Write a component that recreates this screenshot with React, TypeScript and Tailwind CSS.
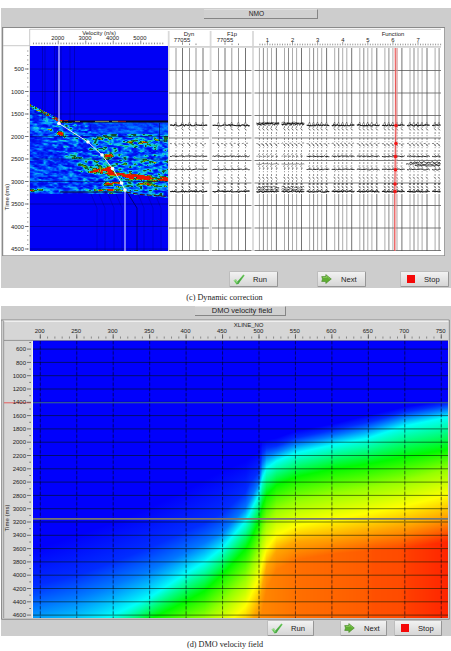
import type { ReactNode } from 'react'

type Point = [number, number]
type RGB = [number, number, number]

const range = (n: number) => Array.from({ length: n }, (_, i) => i)

function hash(x: number, y: number) {
  const s = Math.sin(x * 127.1 + y * 311.7) * 43758.5453
  return s - Math.floor(s)
}

// smooth value noise
function noise(x: number, y: number) {
  const xi = Math.floor(x)
  const yi = Math.floor(y)
  const u = (x - xi) * (x - xi) * (3 - 2 * (x - xi))
  const v = (y - yi) * (y - yi) * (3 - 2 * (y - yi))
  const top = hash(xi, yi) * (1 - u) + hash(xi + 1, yi) * u
  const bottom = hash(xi, yi + 1) * (1 - u) + hash(xi + 1, yi + 1) * u
  return top * (1 - v) + bottom * v
}

function ramp(stops: [number, RGB][], v: number): RGB {
  if (v <= stops[0][0]) return stops[0][1]
  for (let i = 1; i < stops.length; i++) {
    if (v <= stops[i][0]) {
      const [a, ca] = stops[i - 1]
      const [b, cb] = stops[i]
      const t = (v - a) / (b - a)
      return [0, 1, 2].map((k) => Math.round(ca[k] + (cb[k] - ca[k]) * t)) as RGB
    }
  }
  return stops[stops.length - 1][1]
}

const rgb = (c: RGB) => `rgb(${c[0]},${c[1]},${c[2]})`

/* ---------- NMO semblance ---------- */

const semblanceStops: [number, RGB][] = [
  [0, [0, 0, 230]],
  [0.18, [0, 40, 250]],
  [0.34, [0, 120, 255]],
  [0.47, [20, 200, 240]],
  [0.54, [20, 205, 150]],
  [0.6, [10, 60, 50]],
  [0.68, [50, 150, 20]],
  [0.76, [190, 180, 0]],
  [0.84, [150, 50, 0]],
  [0.94, [235, 20, 0]],
]

// centre x, centre y, half width, half height, slope, strength
const blobs = [
  [109, 155.2, 6, 2, 0, 0.8],
  [108.5, 167.5, 6, 2.8, -0.2, 0.8],
  [98, 172, 12, 1.6, 0.06, 0.5],
  [118, 173.5, 18, 2, 0.08, 0.65],
  [140, 177, 17, 2.4, 0.06, 0.75],
  [160, 178.3, 14, 2.1, 0.04, 0.75],
  [110, 183, 9, 1.6, 0, 0.55],
  [115, 189, 4, 3, -0.3, 0.55],
  [33, 190, 8, 1.8, 0, 0.75],
  [96, 189.5, 22, 1, 0, 0.4],
  [60, 133.5, 5, 2.3, 0.2, 0.55],
  [45, 128, 9, 1.6, 0.2, 0.3],
  [140, 140.5, 20, 2.3, 0, 0.34],
  [104, 138, 12, 2, 0.2, 0.22],
  [82, 158, 14, 2, 0.1, 0.25],
  [92, 168, 14, 3, 0.2, 0.2],
  [122, 152, 14, 2, 0, 0.22],
  [138, 162, 22, 2, 0, 0.2],
  [148, 184, 18, 1.8, 0.1, 0.25],
]

function semblance(x: number, y: number) {
  const roof = x < 66 ? 104 + (x - 30) * 0.49 : 121.5
  const floor = x < 124 ? 193 : 193 + (x - 124) * 0.11
  if (y < roof || y > floor) return -1
  const raw = noise(x / 5 + 7, y / 1.9 - x * 0.06) * 0.65 + noise(x / 2.2, y / 1.3 + 40) * 0.35
  const n = Math.max(0, Math.min(1, (raw - 0.5) * 1.7 + 0.5))
  // energy concentrates right of the diagonal trend
  const trend = Math.max(0, Math.min(1, (x - 30 - (y - 118) * 0.65) / 35))
  let v = 0.02 + n * (0.4 + 0.2 * trend)
  if (y < 134 && x > 90) v = 0.12 + n * 0.24
  for (const [cx, cy, w, h, slope, s] of blobs) {
    const dx = x - cx
    const dy = y - cy - slope * dx
    v += s * Math.exp(-((dx / w) ** 2) - (dy / h) ** 2) * (0.6 + n * 0.7)
  }
  if (x < 68 && y - roof < 3.5) v += (noise(x / 2, y * 1.2) - 0.1) * 0.65
  return Math.min(v, 1)
}

function buildSemblance() {
  const paths: Record<string, string> = {}
  for (let y = 103; y < 200; y++) {
    for (let x = 30; x < 168; x++) {
      const v = semblance(x, y)
      if (v < 0) continue
      const color = rgb(ramp(semblanceStops, Math.round(v * 36) / 36))
      paths[color] = (paths[color] ?? '') + `M${x} ${y}h1v1h-1z`
    }
  }
  return Object.entries(paths)
}

const semblancePaths = buildSemblance()

const picks: Point[] = [
  [59, 123.5],
  [88, 142],
  [102, 155],
  [112.5, 168.5],
  [121.5, 183],
  [125, 190],
]

function SemblancePlot() {
  return (
    <g>
      <rect x={30} y={46} width={138} height={205} fill="#0000f5" />
      <g shapeRendering="crispEdges">
        {semblancePaths.map(([color, d]) => (
          <path key={color} d={d} fill={color} />
        ))}
      </g>
      <path d="M62 121.5H168" stroke="#08081c" strokeWidth={1.9} />
      <path d="M75 121.4h5M95 121.4h14M112 121.4h6" stroke="#b5c35c" strokeWidth={0.7} />
      <path d="M118 121.4h8M64 120.5h4" stroke="#b02010" strokeWidth={0.8} />
      <path d="M60 192H122" stroke="#102018" strokeWidth={0.9} />
      <path d="M126 192L140 194.5L168 196.5" stroke="#401008" strokeDasharray="5 2" fill="none" />
      <path d="M159.5 123V141H168" stroke="#001070" strokeWidth={0.7} fill="none" />
      {[42.5, 45, 54.5, 57, 61, 70, 74.5].map((x) => (
        <path key={x} d={`M${x} 46V120`} stroke="#000078" strokeWidth={0.6} opacity={0.75} />
      ))}
      {[97, 105, 114, 122, 144, 153, 161].map((x) => (
        <path key={x} d={`M${x - 6} 194L${x} 208V251`} stroke="#000078" strokeWidth={0.5} fill="none" opacity={0.7} />
      ))}
      <path d="M127 192L137 208V251" stroke="#000050" strokeWidth={0.8} fill="none" />
      {range(9).map((i) => (
        <path key={i} d={`M30 ${69 + i * 22.5}H168`} stroke="#000060" strokeWidth={0.7} opacity={0.7} />
      ))}
      <path d="M59 46V123.5" stroke="#a9a9ff" strokeWidth={1.5} />
      <path d="M125 190V251" stroke="#c4c4ff" strokeWidth={1.2} />
      <path d={'M' + picks.map((p) => p.join(' ')).join('L')} stroke="#e8ecf4" strokeWidth={1} fill="none" />
      {picks.map(([x, y]) => (
        <circle key={y} cx={x} cy={y} r={1.8} fill="#fff" />
      ))}
    </g>
  )
}

/* ---------- NMO gathers ---------- */

const dynTraces = [176, 182.5, 189.5, 196, 203]
const f1pTraces = [218.5, 225, 231.8, 238.5, 245.5]
const functionGroups = range(8).map((g) =>
  [259.4, 263.4, 267.4, 271.5, 276.4].map((x) => x + g * 25.1).filter((x) => x < 441),
)

// horizontal reflection made of short wiggles
function wiggle(x0: number, x1: number, y: number, amp: number) {
  let d = `M${x0} ${y}`
  for (let x = x0 + 1.2; x < x1; x += 1.2) {
    d += `L${x.toFixed(1)} ${(y + (hash(x, y) - 0.5) * amp).toFixed(1)}`
  }
  return d
}

function Gather({ traces, group = -1 }: { traces: number[]; group?: number }) {
  const wide = group < 0
  const x0 = traces[0] - (wide ? 6 : 3)
  const x1 = Math.min(traces[traces.length - 1] + (wide ? 5 : 3), 441)
  const early = group === 0 || group === 1
  return (
    <g fill="none" stroke="#1c1c1c">
      {traces.map((x, i) => (
        <g key={x}>
          <path d={`M${x} 48V122M${x} 194V251`} stroke={i === 4 || wide ? '#444' : '#666'} strokeWidth={i === 4 || i === 1 ? 0.75 : 0.55} />
          <path d={`M${x} 126V193`} strokeWidth={0.65} strokeDasharray="2 1.2 1 1.8" strokeOpacity={0.75} />
          {[128, 144, 154, 166, 177, 186].map((y) => (
            <path key={y} d={`M${x - 1.4} ${y}l1.5 1.2l0.9 1.3`} strokeWidth={0.45} />
          ))}
          <path d={`M${x - 1} 184h2`} strokeWidth={1.1} />
          <path d={`M${x - 2} 126l2-4l1 4M${x - 2} 192l2-3l1 3`} strokeWidth={0.5} />
        </g>
      ))}
      <path d={wiggle(x0, x1, early ? 124 : 125.3, 1.4)} strokeWidth={1.1} />
      {early && <path d={wiggle(x0, x1, 122.8, 1.4)} strokeWidth={0.6} />}
      <path d={wiggle(x0, x1, 143.5, 1)} strokeWidth={0.55} strokeDasharray="2 2.4" />
      <path d={wiggle(x0, x1, 156.3, 1)} strokeWidth={early ? 0.5 : 0.9} strokeDasharray={early ? '2 2' : undefined} />
      <path d={wiggle(x0, x1, early ? 164 : 169.5, 1)} strokeWidth={early ? 0.5 : 0.9} />
      <path d={wiggle(x0, x1, 191.5, 1.3)} strokeWidth={1.1} />
      {early && <path d={wiggle(x0, x1, 187, 2.2) + wiggle(x0, x1, 189.4, 1.5)} strokeWidth={0.6} />}
    </g>
  )
}

function GatherPlots() {
  return (
    <g>
      {range(9).map((i) => (
        <path key={i} d={`M169 ${70.5 + i * 22.5}H209M212 ${70.5 + i * 22.5}H251.5M254.5 ${70.5 + i * 22.5}H441`} stroke="#444" strokeWidth={0.7} />
      ))}
      <Gather traces={dynTraces} />
      <Gather traces={f1pTraces} />
      {functionGroups.map((traces, g) => (
        <Gather key={g} traces={traces} group={g} />
      ))}
      <path d={wiggle(410, 441, 162.5, 1.6) + wiggle(406, 441, 164.2, 1.2) + wiggle(415, 441, 165.6, 0.8)} stroke="#111" strokeWidth={0.8} fill="none" />
      <path d="M394.8 48L398 48L397 190L396 251H394Z" fill="#f4a0a0" opacity={0.55} />
      <path d="M395.2 48L395.8 125L394.7 192V251" stroke="#e64646" strokeWidth={0.9} fill="none" />
      {[[396, 125.5], [396, 143.5], [395.5, 156.5], [395.5, 169.8], [395, 184], [395, 191.5]].map(([x, y]) => (
        <circle key={y} cx={x} cy={y} r={1.8} fill="#f01818" />
      ))}
    </g>
  )
}

function NmoChart() {
  return (
    <svg viewBox="2 27 443 229" className="block h-[229px] w-[443px] fill-[#222] text-[5.9px]">
      <rect x={2} y={27} width={443} height={229} fill="#8a8a8a" />
      <rect x={3.2} y={28} width={441} height={227.3} fill="#fff" />
      <path d="M3 45.7H30M29.7 29V251M30 29.3H441" stroke="#bdbdbd" strokeWidth={0.8} fill="none" />
      <path d="M168.7 31V251M210.6 31V251M253 31V251" stroke="#dadada" strokeWidth={1.8} />
      <path d="M169 46.8H441" stroke="#d2d2d2" strokeWidth={1.8} />

      <text x={99} y={34.6} textAnchor="middle">Velocity (n/s)</text>
      {[2000, 3000, 4000, 5000].map((v, i) => (
        <text key={v} x={57.7 + i * 27.4} y={40.4} textAnchor="middle">{v}</text>
      ))}
      {range(48).map((i) => (
        <path key={i} d={`M${33.5 + i * 2.75} ${(i + 1) % 10 === 0 ? 40.5 : 42.6}V44.3`} stroke="#444" strokeWidth={0.6} />
      ))}

      <text x={189} y={36.4} textAnchor="middle">Dyn</text>
      <text x={182} y={41.8} textAnchor="middle">77055</text>
      <text x={232} y={36.4} textAnchor="middle">F1p</text>
      <text x={225} y={41.8} textAnchor="middle">77055</text>
      <path d="M182.5 42.3v2.5M189.5 43.5v1.6M196 43.5v1.6M225 42.3v2.5M232 43.5v1.6M238.5 43.5v1.6" stroke="#444" strokeWidth={0.6} />

      <text x={393} y={36.4} textAnchor="middle">Function</text>
      {range(7).map((i) => (
        <text key={i} x={267.5 + i * 25.1} y={41.6} textAnchor="middle">{i + 1}</text>
      ))}
      {range(73).map((i) => (
        <path key={i} d={`M${259.9 + i * 2.51} ${i % 10 === 3 ? 42 : 43.7}V45.3`} stroke="#555" strokeWidth={0.6} />
      ))}

      {range(9).map((i) => (
        <g key={i}>
          <text x={24} y={71 + i * 22.5} textAnchor="end">{500 + i * 500}</text>
          <path d={`M25 ${69 + i * 22.5}H28.4`} stroke="#444" strokeWidth={0.7} />
        </g>
      ))}
      {range(45).map((i) => (
        <path key={i} d={`M27 ${51 + i * 4.5}H28.4`} stroke="#555" strokeWidth={0.6} />
      ))}
      <text transform="translate(9 197) rotate(-90)" textAnchor="middle">Time (ms)</text>

      <SemblancePlot />
      <GatherPlots />
    </svg>
  )
}

/* ---------- DMO velocity field ---------- */

// depth of each colour level at a given x
const contours: [number, number[]][] = [
  [33, [550, 586, 608, 645, 680, 710, 740, 770, 800]],
  [77, [535, 575, 597, 632, 665, 690, 720, 750, 780]],
  [113, [522, 562, 585, 615, 645, 670, 700, 730, 760]],
  [150, [507, 547, 570, 597, 619, 645, 670, 700, 730]],
  [186, [490, 531, 552, 573, 601, 626, 650, 680, 700]],
  [204, [480, 523, 543, 562, 591, 618, 640, 660, 680]],
  [223, [470, 512, 531, 547, 573, 602, 628, 645, 665]],
  [245, [461, 492, 508, 521, 549, 579, 606, 630, 650]],
  [249, [458, 483, 500, 514, 542, 571, 598, 625, 646]],
  [258, [452, 472, 484, 495, 522, 550, 579, 607, 632]],
  [262, [441, 453, 464, 478, 506, 534, 562, 585, 610]],
  [266, [440, 448, 456, 468, 495, 523, 549, 567, 590]],
  [276, [438, 446, 452, 461, 485, 510, 535, 551, 570]],
  [295, [431, 438, 444, 453, 477, 502, 526, 542, 560]],
  [332, [424, 430, 436, 445, 469, 494, 519, 538, 554]],
  [368, [415, 422, 428, 438, 464, 488, 513, 532, 551]],
  [404, [407, 412, 417, 426, 457, 481, 506, 526, 548]],
  [448, [400, 404, 409, 417, 449, 469, 495, 516, 542]],
]

const levelColors: RGB[] = [
  [0, 0, 252],
  [0, 45, 255],
  [0, 120, 255],
  [0, 255, 250],
  [0, 250, 0],
  [150, 255, 0],
  [255, 255, 0],
  [255, 165, 0],
]

const basementStops: [number, RGB][] = [
  [262, [255, 135, 0]],
  [300, [255, 110, 0]],
  [365, [255, 92, 0]],
  [372, [255, 80, 0]],
  [400, [255, 75, 0]],
  [408, [255, 62, 0]],
  [448, [255, 36, 0]],
]

function depthsAt(x: number) {
  const i = Math.max(1, contours.findIndex(([cx]) => x <= cx))
  const [x0, a] = contours[i - 1]
  const [x1, b] = contours[i]
  const t = (x - x0) / (x1 - x0)
  return a.map((y, k) => y + (b[k] - y) * t)
}

function VelocityField() {
  return (
    <g shapeRendering="crispEdges">
      {range(415).map((i) => {
        const x = 33 + i
        return (
          <g key={x}>
            <linearGradient id={`col${x}`} gradientUnits="userSpaceOnUse" x1={0} y1={341} x2={0} y2={841}>
              {depthsAt(x).map((y, k) => (
                <stop key={k} offset={(y - 341) / 500} stopColor={rgb(levelColors[k] ?? ramp(basementStops, x))} />
              ))}
            </linearGradient>
            <rect x={x} y={341} width={1} height={277} fill={`url(#col${x})`} />
          </g>
        )
      })}
    </g>
  )
}

function DmoChart() {
  const xs = range(12).map((i) => 40.3 + i * 36.45)
  const ys = range(21).map((i) => 349.1 + i * 13.3)
  return (
    <svg viewBox="1 319 450 301" className="block h-[301px] w-[450px] fill-[#222] text-[6px]">
      <rect x={1} y={319} width={450} height={301} fill="#cdcdcd" />
      <path d="M1 320H449.3V619.3H1.5Z" stroke="#858585" strokeWidth={0.9} fill="none" />
      <path d="M3.7 321.2H448.5" stroke="#fafafa" strokeWidth={1.2} />
      <rect x={4} y={322} width={444.5} height={296} fill="#d6d6d6" />
      <path d="M3.7 321V618" stroke="#8d8d8d" strokeWidth={0.8} />
      <path d="M4 340.4H33" stroke="#777" strokeWidth={0.7} />
      <path d="M32.4 341V618" stroke="#f0f0f0" />

      <VelocityField />
      {ys.map((y) => (
        <path key={y} d={`M33 ${y}H448`} stroke="#001800" strokeWidth={0.8} strokeOpacity={0.7} />
      ))}
      {xs.map((x) => (
        <g key={x}>
          <path d={`M${x} 341V618`} stroke="#000020" strokeWidth={0.7} strokeOpacity={0.25} />
          <path d={`M${x} 341V618`} stroke="#000010" strokeWidth={0.8} strokeOpacity={0.6} strokeDasharray="3.2 2" />
        </g>
      ))}
      <path d="M33 402.8H448" stroke="#3c6c9c" strokeWidth={1.1} />
      <path d="M33 518.9H448" stroke="#77776d" strokeWidth={1.6} />
      <path d="M33 340.7H448" stroke="#00007a" strokeWidth={0.6} />
      <path d="M4 402.8H31" stroke="#e45050" strokeWidth={0.9} />

      <text x={248.7} y={327.2} textAnchor="middle">XLINE_NO</text>
      {xs.map((x, i) => (
        <g key={x}>
          <text x={x - 0.6} y={333.4} textAnchor="middle">{200 + i * 50}</text>
          <path d={`M${x} 334.3V338.4`} stroke="#333" strokeWidth={0.7} />
        </g>
      ))}
      {range(56).map((i) => (
        <path key={i} d={`M${40.3 + i * 7.29} 336.5V338.6`} stroke="#555" strokeWidth={0.6} />
      ))}
      {ys.map((y, i) => (
        <g key={y}>
          <text x={26} y={y + 2.1} textAnchor="end">{600 + i * 200}</text>
          <path d={`M27 ${y}H31M29.3 ${y - 6.6}H31`} stroke="#444" strokeWidth={0.7} />
        </g>
      ))}
      <text transform="translate(9.2 518) rotate(-90)" textAnchor="middle">Time (ms)</text>
    </svg>
  )
}

/* ---------- Window chrome ---------- */

function CheckIcon() {
  return (
    <svg viewBox="0 0 12 11" className="h-[11px] w-3">
      <path d="M0.5 6.3L3 5.2L4.5 7.6L10.3 0.5L11.7 1.6L5.3 10L3.3 10.3Z" fill="#6cc95c" />
      <path d="M3.3 10.3L4.7 7.6L11 1.1L5.3 10Z" fill="#48a545" />
      <path d="M1 6.5L2.8 5.9L4.2 8.5" stroke="#b4e4a6" strokeWidth={0.8} fill="none" />
    </svg>
  )
}

function ArrowIcon() {
  return (
    <svg viewBox="0 0 11 10" className="h-2.5 w-[11px]">
      <path d="M0.7 2.6H4.8V0.6L10.3 5L4.8 9.5V7.5H0.7L1.5 5Z" fill="#5eae32" stroke="#468827" strokeWidth={0.6} />
      <path d="M1.8 3.5H5.5V2L8.6 4.7" stroke="#96cf68" strokeWidth={0.7} fill="none" />
    </svg>
  )
}

function ActionButton({ icon, label, className }: { icon: ReactNode; label: string; className: string }) {
  return (
    <button
      type="button"
      className={`flex h-4 items-center rounded-[1.5px] border border-[#969696] border-t-[#bdbdbd] border-l-[#bdbdbd] bg-linear-to-b from-[#f2f2f2] to-[#d6d6d6] text-[7.6px] leading-none text-[#222] ${className}`}
    >
      <span className="flex w-[23px] shrink-0 items-center pl-[3px]">{icon}</span>
      <span className="pt-px">{label}</span>
    </button>
  )
}

function Title({ children, className }: { children: ReactNode; className: string }) {
  return (
    <h2 className={`flex items-center justify-center border-r border-b border-[#858585] border-t border-t-[#dedede] bg-[#d0d0d0] leading-none text-[#222] ${className}`}>
      {children}
    </h2>
  )
}

const stop = <span className="ml-[3px] block size-2 bg-[#f50808]" />

export default function App() {
  return (
    <main className="h-[651px] w-[451px] overflow-hidden bg-white pt-2 font-['Liberation_Sans',sans-serif]">
      <section className="ml-px h-70 bg-[#cdcdcd] pt-px">
        <Title className="ml-[203px] h-2.5 w-[114px] pr-2 text-[6.6px]">NMO</Title>
        <div className="mt-2 ml-px">
          <NmoChart />
        </div>
        <div className="mt-[15px] flex pl-[228px]">
          <ActionButton className="w-[49px]" icon={<CheckIcon />} label="Run" />
          <ActionButton className="ml-[39px] w-[49px]" icon={<ArrowIcon />} label="Next" />
          <ActionButton className="ml-[34px] w-[49px]" icon={stop} label="Stop" />
        </div>
      </section>
      <p className="h-[18px] pt-[4.5px] pr-[2px] text-center font-['Liberation_Serif',serif] text-[8.2px] leading-[10px] text-[#222]">
        (c) Dynamic correction
      </p>

      <section className="ml-px h-[330px] bg-[#cdcdcd]">
        <Title className="ml-[194px] h-2.5 w-[91px] pl-1 text-[7.5px]">DMO velocity field</Title>
        <div className="mt-[3px]">
          <DmoChart />
        </div>
        <div className="flex pl-[266px]">
          <ActionButton className="w-[47px]" icon={<CheckIcon />} label="Run" />
          <ActionButton className="ml-[26px] w-[47px]" icon={<ArrowIcon />} label="Next" />
          <ActionButton className="ml-[7px] w-[48px]" icon={stop} label="Stop" />
        </div>
      </section>
      <p className="pt-1 pr-px text-center font-['Liberation_Serif',serif] text-[8.2px] leading-[10px] text-[#222]">
        (d) DMO velocity field
      </p>
    </main>
  )
}
